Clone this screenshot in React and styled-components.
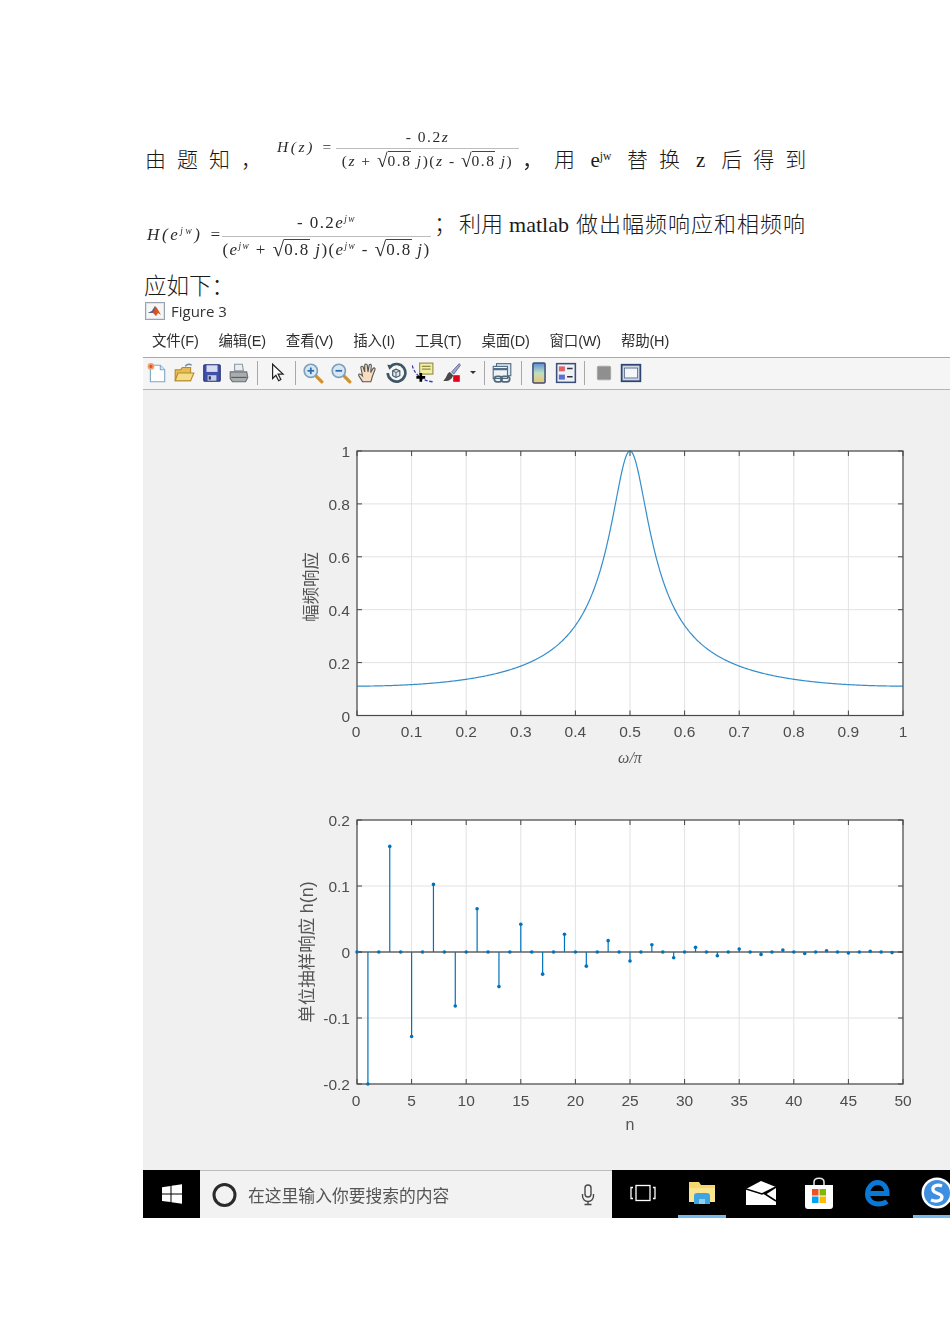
import styled, { createGlobalStyle } from 'styled-components'

const GlobalStyle = createGlobalStyle`
  html, body {
    margin: 0;
    padding: 0;
    background: #fff;
  }
`

const SERIF = `"Liberation Serif", "Noto Sans CJK SC", serif`
const SANS = `"Liberation Sans", "Noto Sans CJK SC", sans-serif`
const BLUE = '#0072bd'

const Page = styled.div`
  width: 950px;
  height: 1344px;
  overflow: hidden;
  padding: 128px 0 0 143px;
  box-sizing: border-box;
  font-family: ${SERIF};
  color: #1a1a1a;
`

const LineOne = styled.div`
  display: flex;
  align-items: flex-end;
  gap: 11px;
  padding-left: 2px;
  height: 44px;
  font-size: 21px;
  line-height: 24px;
`

const Token = styled.span`
  padding: 0 ${(p) => p.$pad || 0}px;
  white-space: nowrap;
  font-weight: 300;
`

const Sup = styled.sup`
  font-size: 0.55em;
  line-height: 0;
  vertical-align: 0.6em;
  font-style: ${(p) => (p.$italic ? 'italic' : 'normal')};
`

const Formula = styled.div`
  display: flex;
  align-items: flex-start;
  margin: 0 ${(p) => p.$right || 0}px 0 ${(p) => p.$left || 0}px;
  color: #2b2b2b;
  filter: blur(0.3px);
`

const Lhs = styled.div`
  font-style: italic;
  font-size: ${(p) => p.$size}px;
  letter-spacing: 2.6px;
  line-height: 20px;
  margin-top: ${(p) => p.$top}px;
  width: ${(p) => p.$w}px;
  white-space: nowrap;
`

const Fraction = styled.div`
  display: flex;
  flex-direction: column;
  align-items: center;
  width: ${(p) => p.$w}px;
  font-size: ${(p) => p.$size}px;
  letter-spacing: ${(p) => p.$spacing}px;
`

const Numer = styled.div`
  height: ${(p) => p.$h}px;
  line-height: ${(p) => p.$h - 2}px;
  white-space: nowrap;
`

const Denom = styled.div`
  align-self: stretch;
  height: ${(p) => p.$h}px;
  line-height: ${(p) => p.$h}px;
  border-top: 1px solid #bdbdbd;
  text-align: center;
  white-space: nowrap;
  box-sizing: border-box;
`

const Var = styled.i`
  font-style: italic;
`

const Radical = styled.span`
  display: inline-block;
  font-size: 1.25em;
  line-height: 1;
  letter-spacing: 0;
  vertical-align: -1px;
`

const Radicand = styled.span`
  display: inline-block;
  line-height: 1;
  border-top: 1px solid #444;
  padding-top: 1px;
`

const Comma = styled.div`
  align-self: flex-end;
  font-size: 21px;
  line-height: 24px;
  width: 14px;
  padding-left: 3px;
  box-sizing: content-box;
  margin-right: -3px;
`

const LineTwo = styled.div`
  display: flex;
  align-items: flex-start;
  margin-top: 40px;
  padding-left: 3px;
  height: 50px;
  font-size: 22px;
  line-height: 26px;
`

const LineTwoText = styled.span`
  white-space: nowrap;
  letter-spacing: ${(p) => p.$spacing || 0}px;
  margin-left: ${(p) => p.$left || 0}px;
  font-weight: 300;
`

const LineThree = styled.div`
  margin-top: 13px;
  height: 24px;
  padding-left: 1px;
  font-size: 22.5px;
  line-height: 24px;
  font-weight: 300;
`

const FigureWindow = styled.section`
  width: 807px;
  margin-top: 3px;
  background: #f0f0f0;
  filter: blur(0.35px);
`

const TitleBar = styled.div`
  display: flex;
  align-items: center;
  gap: 6px;
  height: 23px;
  padding: 0 0 5px 2px;
  box-sizing: border-box;
  background: #fff;
  font-family: "Open Sans", sans-serif;
  font-size: 15px;
  color: #333;
`

const MenuBar = styled.nav`
  display: flex;
  align-items: center;
  gap: 20px;
  height: 33px;
  padding: 0 0 4px 9px;
  box-sizing: border-box;
  background: #fff;
  border-bottom: 1px solid #a9a9a9;
  font-family: ${SANS};
  font-size: 14.5px;
  letter-spacing: -0.2px;
  color: #2e2e2e;
`

const Toolbar = styled.div`
  display: flex;
  align-items: center;
  height: 32px;
  padding-bottom: 2px;
  box-sizing: border-box;
  background: #f5f5f5;
  border-bottom: 1px solid #b5b5b5;
`

const ToolBtn = styled.span`
  display: flex;
  flex: none;
  align-items: center;
  justify-content: center;
  width: 27.5px;
  height: 28px;
`

const Caret = styled.span`
  width: 0;
  height: 0;
  margin: 0 6px 0 5px;
  border-left: 3px solid transparent;
  border-right: 3px solid transparent;
  border-top: 3px solid #333;
`

const Sep = styled.span`
  flex: none;
  width: 1px;
  height: 24px;
  margin: 0 ${(p) => p.$r}px 0 ${(p) => p.$l}px;
  background: #a8a8a8;
`

const Plots = styled.svg`
  display: block;
  width: 807px;
  height: 780px;
`

const Taskbar = styled.footer`
  display: flex;
  height: 48px;
  background: #000;
  overflow: hidden;
`

const StartButton = styled.div`
  display: flex;
  flex: none;
  align-items: center;
  justify-content: center;
  width: 57px;
`

const SearchBox = styled.div`
  display: flex;
  flex: none;
  align-items: center;
  width: 412px;
  padding: 0 16px 0 12px;
  box-sizing: border-box;
  background: #f2f2f2;
  border-top: 1px solid #bcbcbc;
`

const SearchText = styled.span`
  flex: 1;
  margin-left: 10px;
  font-family: ${SANS};
  font-size: 16.8px;
  color: #555;
  white-space: nowrap;
`

const TrayIcons = styled.div`
  display: flex;
  flex: none;
  gap: 10.75px;
  padding-left: 7px;
`

const TrayIcon = styled.div`
  display: flex;
  flex: none;
  align-items: center;
  justify-content: center;
  width: 48px;
  height: 48px;
  box-sizing: border-box;
  border-bottom: 3px solid ${(p) => (p.$active ? '#76b9ed' : 'transparent')};
`

function Root({ children }) {
  return (
    <>
      <Radical>√</Radical>
      <Radicand>{children}</Radicand>
    </>
  )
}

const Ico = ({ children, size = 22 }) => (
  <svg width={size} height={size} viewBox="0 0 20 20">{children}</svg>
)

const MatlabLogo = () => (
  <svg width="20" height="20" viewBox="0 0 20 20">
    <rect x="0.5" y="1.5" width="19" height="17" fill="#dfe4ea" stroke="#9aa3ad" />
    <rect x="2" y="3" width="16" height="14" fill="#f4f6f8" />
    <path d="M3 12l4-2 3-5 2 2 4 7-3-2-2 3-3-3z" fill="#d9531e" />
    <path d="M3 12l4-2 3-5-1 6-3 1z" fill="#3b6ea5" />
  </svg>
)

const NewIcon = () => (
  <Ico>
    <path d="M4 3h9l4 4v11H4z" fill="#fff" stroke="#7fa6c4" />
    <path d="M13 3v4h4" fill="#dbe7f0" stroke="#7fa6c4" />
    <circle cx="4.5" cy="4" r="3" fill="#f0a070" />
    <circle cx="4.5" cy="4" r="1.4" fill="#e2551e" />
  </Ico>
)

const OpenIcon = () => (
  <Ico>
    <path d="M2 7h5l1.5-2H16v12H2z" fill="#e6bb55" stroke="#b48a2e" />
    <path d="M2 17l2.5-7H19l-3 7z" fill="#f7dc88" stroke="#b48a2e" />
    <path d="M11 4c2-2.5 4-2.5 6-1" fill="none" stroke="#6f8aa0" strokeWidth="1.2" />
  </Ico>
)

const SaveIcon = () => (
  <Ico>
    <rect x="2.5" y="2.5" width="15" height="15" rx="1" fill="#3f50a8" stroke="#27337a" />
    <rect x="5" y="3" width="10" height="6" fill="#d8dcf2" />
    <rect x="6" y="12" width="8" height="5" fill="#c9cde0" />
    <rect x="7" y="13" width="2" height="3" fill="#27337a" />
  </Ico>
)

const PrintIcon = () => (
  <Ico>
    <path d="M6 2h7l1 6H6z" fill="#e8eef2" stroke="#8c979e" />
    <path d="M2 9h15l1 5-2 4H4l-2-3z" fill="#a8adb0" stroke="#6a6f72" />
    <path d="M3 14h14" stroke="#565a5d" />
  </Ico>
)

const PointerIcon = () => (
  <Ico>
    <path d="M6 2v13l3-3 2.500 5 2-1-2.500-5h4.500z" fill="#fff" stroke="#222" strokeWidth="1.100" />
  </Ico>
)

const ZoomIcon = ({ plus }) => (
  <Ico>
    <path d="M12 12l6 6" stroke="#d0912e" strokeWidth="3" strokeLinecap="round" />
    <circle cx="8" cy="8" r="6" fill="#d6e8f5" stroke="#7f9fb8" strokeWidth="1.500" />
    <path d="M5 8h6" stroke="#2d6ea8" strokeWidth="1.600" />
    {plus && <path d="M8 5v6" stroke="#2d6ea8" strokeWidth="1.600" />}
  </Ico>
)

const HandIcon = () => (
  <Ico>
    <path
      d="M5 18c-1-3-4-5-3.500-6.500s2.500 0 3.500 1L3.500 5c0-1.500 2-1.500 2.300 0L7 9 7 3c0-1.500 2.200-1.500 2.300 0L10 9l1-6c.3-1.500 2.300-1.200 2 .4L12.500 9.500 14.500 6c.8-1.300 2.500-.5 1.800 1L14 13c-.5 2-1 4-1.500 5z"
      fill="#f6dcc0"
      stroke="#555"
    />
  </Ico>
)

const RotateIcon = () => (
  <Ico>
    <path d="M4.500 4.500A8 8 0 1 1 2.500 10" fill="none" stroke="#3e5566" strokeWidth="2.400" />
    <path d="M2 2.500l6 .5-4 4z" fill="#3e5566" />
    <path d="M7 8l3-1.500L13.500 8v4.500L10 14 7 12.500z" fill="#dfe8ee" stroke="#3e5566" />
    <path d="M7 8l3 1.500L13.500 8M10 9.500V14" fill="none" stroke="#3e5566" strokeWidth="0.800" />
  </Ico>
)

const DataCursorIcon = () => (
  <Ico>
    <path d="M0 3c3 9 9 14 19 15" fill="none" stroke="#3a3ac0" strokeWidth="1.200" strokeDasharray="3 1.500" />
    <rect x="7" y="1" width="12" height="10" fill="#f2eea8" stroke="#8f8c44" />
    <path d="M9 4h8M9 6.500h8" stroke="#8f8c44" />
    <path d="M8 10v8M4 14h8" stroke="#000" strokeWidth="2.400" />
  </Ico>
)

const BrushIcon = () => (
  <Ico>
    <path d="M17.500 1.500l-7 7.500 2 2 6-8z" fill="#9fa8d0" stroke="#5a6390" strokeWidth="0.800" />
    <path d="M9 9c-3 1-2 4-6 8 4 1 8-1 9-5z" fill="#4a4a4a" />
    <rect x="12" y="12" width="6" height="6" fill="#e6001e" />
  </Ico>
)

const LinkIcon = () => (
  <Ico>
    <rect x="5" y="1.500" width="13" height="11" fill="#dfe7ef" stroke="#4d6b85" />
    <rect x="2" y="4" width="13" height="11" fill="#eef3f7" stroke="#4d6b85" />
    <path d="M2 6.500h13" stroke="#4d6b85" strokeWidth="2" />
    <rect x="3" y="13" width="7" height="5" rx="2.500" fill="none" stroke="#51677a" strokeWidth="1.600" />
    <rect x="9" y="13" width="8" height="5" rx="2.500" fill="none" stroke="#51677a" strokeWidth="1.600" />
  </Ico>
)

const ColorbarIcon = () => (
  <Ico>
    <defs>
      <linearGradient id="cbar" x1="0" y1="0" x2="0" y2="1">
        <stop offset="0" stopColor="#5a8fd8" />
        <stop offset="0.5" stopColor="#bfe0c0" />
        <stop offset="1" stopColor="#f2c26a" />
      </linearGradient>
    </defs>
    <rect x="4.500" y="1" width="11" height="18" rx="1" fill="url(#cbar)" stroke="#3c4f78" strokeWidth="1.400" />
  </Ico>
)

const LegendIcon = () => (
  <Ico>
    <rect x="1.500" y="1.500" width="17" height="17" fill="#eef2f7" stroke="#3c4f78" strokeWidth="1.400" />
    <rect x="3.500" y="4" width="5.500" height="4.500" fill="#e0636a" />
    <rect x="3.500" y="11.500" width="5.500" height="4.500" fill="#5a6fd0" />
    <path d="M11 6h5M11 13.500h5" stroke="#333" strokeWidth="1.400" />
  </Ico>
)

const HideIcon = () => (
  <Ico>
    <rect x="4" y="4" width="12" height="12" rx="1" fill="#8f8f8f" stroke="#a8a8a8" />
  </Ico>
)

const ShowIcon = () => (
  <Ico>
    <rect x="1.500" y="2.500" width="17" height="15" fill="#cdd7e6" stroke="#2f4470" strokeWidth="1.600" />
    <rect x="4" y="5.500" width="12" height="9" fill="#f4f6f9" stroke="#5a6d92" strokeWidth="0.800" />
  </Ico>
)

const WindowsLogo = () => (
  <svg width="20" height="20" viewBox="0 0 20 20">
    <path d="M0 3.200l8.500-1.200v7.600H0zM9.500 1.800L20 .3v9.300H9.500zM0 10.600h8.500v7.500L0 16.900zM9.500 10.600H20v9.100L9.500 18.200z" fill="#fff" />
  </svg>
)

const MicIcon = () => (
  <svg width="16" height="22" viewBox="0 0 16 22">
    <rect x="5" y="1" width="6" height="12" rx="3" fill="none" stroke="#4a4a4a" strokeWidth="1.400" />
    <path d="M2.500 10v2a5.500 5.500 0 0 0 11 0v-2M8 17.500V20M4.500 20.500h7" fill="none" stroke="#4a4a4a" strokeWidth="1.400" />
  </svg>
)

const TaskViewIcon = () => (
  <svg width="26" height="18" viewBox="0 0 26 18">
    <rect x="6" y="1.500" width="14" height="15" fill="none" stroke="#fff" strokeWidth="1.300" />
    <path d="M3 3.500H1v11h2M23 3.500h2v11h-2" fill="none" stroke="#fff" strokeWidth="1.300" />
  </svg>
)

const ExplorerIcon = () => (
  <svg width="28" height="24" viewBox="0 0 28 24">
    <path d="M1 1h10l2 3h14v17H1z" fill="#f5d76e" />
    <path d="M1 7h26v14H1z" fill="#fbe58f" />
    <path d="M6 23V15c0-2 1-3 3-3h10c2 0 3 1 3 3v8h-5v-5h-6v5z" fill="#3fa5e0" />
    <rect x="11" y="18" width="6" height="5" fill="#8fd0f2" />
  </svg>
)

const MailIcon = () => (
  <svg width="30" height="24" viewBox="0 0 30 24">
    <path d="M0 8L15 0l15 6v18H0z" fill="#fff" />
    <path d="M0 8l16 5L30 6l-11 7 11 7" fill="none" stroke="#000" strokeWidth="1.600" />
  </svg>
)

const StoreIcon = () => (
  <svg width="28" height="32" viewBox="0 0 28 32">
    <path d="M9 8V5c0-5 10-5 10 0v3" fill="none" stroke="#e8e8e8" strokeWidth="1.500" />
    <path d="M0 8h28v21a3 3 0 0 1-3 3H3a3 3 0 0 1-3-3z" fill="#fff" />
    <rect x="7" y="12" width="6.500" height="6.500" fill="#f25022" />
    <rect x="14.500" y="12" width="6.500" height="6.500" fill="#7fba00" />
    <rect x="7" y="19.500" width="6.500" height="6.500" fill="#00a4ef" />
    <rect x="14.500" y="19.500" width="6.500" height="6.500" fill="#ffb900" />
  </svg>
)

const EdgeIcon = () => (
  <svg width="26" height="28" viewBox="0 0 26 28">
    <path
      d="M4 14.500h18c0-6.500-4-11-9.500-11S2.500 9 2.500 15s4.500 10 10.500 10c4 0 7-1 9-2.500"
      fill="none"
      stroke="#0a78d7"
      strokeWidth="5"
    />
  </svg>
)

const SogouIcon = () => (
  <svg width="32" height="32" viewBox="0 0 32 32">
    <circle cx="16" cy="16" r="15.500" fill="#fff" />
    <circle cx="16" cy="16" r="13" fill="#3f8fe0" />
    <path d="M21 9c-5-2-10 0-9 4s9 3 9 7-6 5-11 3" fill="none" stroke="#fff" strokeWidth="3.200" />
  </svg>
)

const X0 = 357
const PLOT_W = 546
const freqTop = 451
const freqBottom = 715.5
const stemTop = 820
const stemBottom = 1084

const xFreq = (v) => X0 + v * PLOT_W
const yFreq = (v) => freqBottom - v * (freqBottom - freqTop)
const xStem = (n) => X0 + (n / 50) * PLOT_W
const yStem = (v) => stemTop + ((0.2 - v) / 0.4) * (stemBottom - stemTop)

const magnitude = (x) => {
  const w = Math.PI * x
  const re = Math.cos(2 * w) + 0.8
  const im = Math.sin(2 * w)
  return 0.2 / Math.hypot(re, im)
}

const impulse = (n) => (n % 2 === 0 ? 0 : -0.2 * Math.pow(-0.8, (n - 1) / 2))

const curve = Array.from({ length: 601 }, (_, i) => {
  const x = i / 600
  return `${xFreq(x).toFixed(2)},${yFreq(magnitude(x)).toFixed(2)}`
}).join(' ')

const tenths = [0, 0.1, 0.2, 0.3, 0.4, 0.5, 0.6, 0.7, 0.8, 0.9, 1]
const fives = [0, 5, 10, 15, 20, 25, 30, 35, 40, 45, 50]
const samples = Array.from({ length: 50 }, (_, n) => n)

const TickLabel = styled.text`
  font-family: "Liberation Sans", sans-serif;
  font-size: 15.5px;
  fill: #4d4d4d;
`

const AxisLabel = styled.text`
  font-family: ${(p) => (p.$serif ? SERIF : SANS)};
  font-style: ${(p) => (p.$italic ? 'italic' : 'normal')};
  font-size: ${(p) => p.$size}px;
  fill: #555;
`

const SansPart = styled.tspan`
  font-family: "Liberation Sans", sans-serif;
  font-size: 18px;
`

function Axes({ top, bottom, xs, ys, xLabels, yLabels }) {
  const right = X0 + PLOT_W
  return (
    <g>
      <rect x={X0} y={top} width={PLOT_W} height={bottom - top} fill="#fff" />
      {xs.map((x) => <path key={x} d={`M${x} ${top}V${bottom}`} stroke="#e2e2e2" />)}
      {ys.map((y) => <path key={y} d={`M${X0} ${y}H${right}`} stroke="#e2e2e2" />)}
      {xs.map((x) => (
        <path key={x} d={`M${x} ${top}v5M${x} ${bottom}v-5`} stroke="#444" />
      ))}
      {ys.map((y) => (
        <path key={y} d={`M${X0} ${y}h5M${right} ${y}h-5`} stroke="#444" />
      ))}
      <rect x={X0} y={top} width={PLOT_W} height={bottom - top} fill="none" stroke="#4a4a4a" strokeWidth="1.200" />
      {xLabels.map((t, i) => (
        <TickLabel key={t} x={i === 0 ? xs[i] - 1 : xs[i]} y={Math.floor(bottom) + 22} textAnchor="middle">{t}</TickLabel>
      ))}
      {yLabels.map((t, i) => (
        <TickLabel key={t} x={350} y={ys[i] + 6} textAnchor="end">{t}</TickLabel>
      ))}
    </g>
  )
}

export default function App() {
  return (
    <Page>
      <GlobalStyle />

      <LineOne>
        <Token>由</Token>
        <Token>题</Token>
        <Token>知</Token>
        <Token>，</Token>
        <Formula $left={4} $right={10}>
          <Lhs $size={15.500} $top={9} $w={59}>H(z) =</Lhs>
          <Fraction $w={183} $size={15.500} $spacing={1.500}>
            <Numer $h={20}>- 0.2<Var>z</Var></Numer>
            <Denom $h={24}>
              (<Var>z</Var> + <Root>0.8</Root> <Var>j</Var>)(<Var>z</Var> - <Root>0.8</Root> <Var>j</Var>)
            </Denom>
          </Fraction>
          <Comma>，</Comma>
        </Formula>
        <Token>用</Token>
        <Token $pad={4.500}>e<Sup>jw</Sup></Token>
        <Token>替</Token>
        <Token>换</Token>
        <Token $pad={5}>z</Token>
        <Token>后</Token>
        <Token>得</Token>
        <Token>到</Token>
      </LineOne>

      <LineTwo>
        <Formula $left={1}>
          <Lhs $size={17} $top={13} $w={75}>H(e<Sup $italic>jw</Sup>) =</Lhs>
          <Fraction $w={209} $size={17} $spacing={1.400}>
            <Numer $h={24}>- 0.2<Var>e</Var><Sup $italic>jw</Sup></Numer>
            <Denom $h={26}>
              (<Var>e</Var><Sup $italic>jw</Sup> + <Root>0.8</Root> <Var>j</Var>)(<Var>e</Var><Sup $italic>jw</Sup> - <Root>0.8</Root> <Var>j</Var>)
            </Denom>
          </Fraction>
        </Formula>
        <LineTwoText $left={3}>；</LineTwoText>
        <LineTwoText $left={3}>利用</LineTwoText>
        <LineTwoText $left={6}>matlab</LineTwoText>
        <LineTwoText $left={7} $spacing={1}>做出幅频响应和相频响</LineTwoText>
      </LineTwo>

      <LineThree>应如下：</LineThree>

      <FigureWindow>
        <TitleBar>
          <MatlabLogo />
          Figure 3
        </TitleBar>

        <MenuBar>
          <span>文件(F)</span>
          <span>编辑(E)</span>
          <span>查看(V)</span>
          <span>插入(I)</span>
          <span>工具(T)</span>
          <span>桌面(D)</span>
          <span>窗口(W)</span>
          <span>帮助(H)</span>
        </MenuBar>

        <Toolbar>
          <ToolBtn><NewIcon /></ToolBtn>
          <ToolBtn><OpenIcon /></ToolBtn>
          <ToolBtn><SaveIcon /></ToolBtn>
          <ToolBtn><PrintIcon /></ToolBtn>
          <Sep $l={4} $r={5} />
          <ToolBtn><PointerIcon /></ToolBtn>
          <Sep $l={4} $r={4} />
          <ToolBtn><ZoomIcon plus /></ToolBtn>
          <ToolBtn><ZoomIcon /></ToolBtn>
          <ToolBtn><HandIcon /></ToolBtn>
          <ToolBtn><RotateIcon /></ToolBtn>
          <ToolBtn><DataCursorIcon /></ToolBtn>
          <ToolBtn><BrushIcon /></ToolBtn>
          <Caret />
          <Sep $l={2} $r={4} />
          <ToolBtn><LinkIcon /></ToolBtn>
          <Sep $l={5} $r={3} />
          <ToolBtn><ColorbarIcon /></ToolBtn>
          <ToolBtn><LegendIcon /></ToolBtn>
          <Sep $l={4} $r={5} />
          <ToolBtn><HideIcon /></ToolBtn>
          <ToolBtn><ShowIcon /></ToolBtn>
        </Toolbar>

        <Plots viewBox="143 390 807 780">
          <Axes
            top={freqTop}
            bottom={freqBottom}
            xs={tenths.map(xFreq)}
            ys={[0, 0.2, 0.4, 0.6, 0.8, 1].map(yFreq)}
            xLabels={tenths}
            yLabels={[0, 0.2, 0.4, 0.6, 0.8, 1]}
          />
          <polyline points={curve} fill="none" stroke={BLUE} strokeWidth="1.200" opacity="0.8" />
          <AxisLabel $serif $italic $size={16} x={630} y={763} textAnchor="middle">ω/π</AxisLabel>
          <AxisLabel $serif $size={17.500} transform="translate(317 587) rotate(-90)" textAnchor="middle">幅频响应</AxisLabel>

          <Axes
            top={stemTop}
            bottom={stemBottom}
            xs={fives.map(xStem)}
            ys={[-0.2, -0.1, 0, 0.1, 0.2].map(yStem)}
            xLabels={fives}
            yLabels={[-0.2, -0.1, 0, 0.1, 0.2]}
          />
          <path d={`M${X0} ${yStem(0)}H${X0 + PLOT_W}`} stroke="#222" strokeWidth="1.200" />
          {samples.map((n) => (
            <g key={n}>
              <path d={`M${xStem(n)} ${yStem(0)}V${yStem(impulse(n))}`} stroke={BLUE} strokeWidth="1.200" />
              <circle cx={xStem(n)} cy={yStem(impulse(n))} r="1.800" fill={BLUE} />
            </g>
          ))}
          <AxisLabel $size={16} x={630} y={1130} textAnchor="middle">n</AxisLabel>
          <AxisLabel $serif $size={17.500} transform="translate(313 952) rotate(-90)" textAnchor="middle">
            单位抽样响应 <SansPart>h(n)</SansPart>
          </AxisLabel>
        </Plots>

        <Taskbar>
          <StartButton><WindowsLogo /></StartButton>
          <SearchBox>
            <svg width="26" height="26" viewBox="0 0 26 26">
              <circle cx="12.500" cy="13" r="10.500" fill="none" stroke="#2a2a2a" strokeWidth="3" />
            </svg>
            <SearchText>在这里输入你要搜索的内容</SearchText>
            <MicIcon />
          </SearchBox>
          <TrayIcons>
            <TrayIcon><TaskViewIcon /></TrayIcon>
            <TrayIcon $active><ExplorerIcon /></TrayIcon>
            <TrayIcon><MailIcon /></TrayIcon>
            <TrayIcon><StoreIcon /></TrayIcon>
            <TrayIcon><EdgeIcon /></TrayIcon>
            <TrayIcon $active><SogouIcon /></TrayIcon>
          </TrayIcons>
        </Taskbar>
      </FigureWindow>
    </Page>
  )
}
